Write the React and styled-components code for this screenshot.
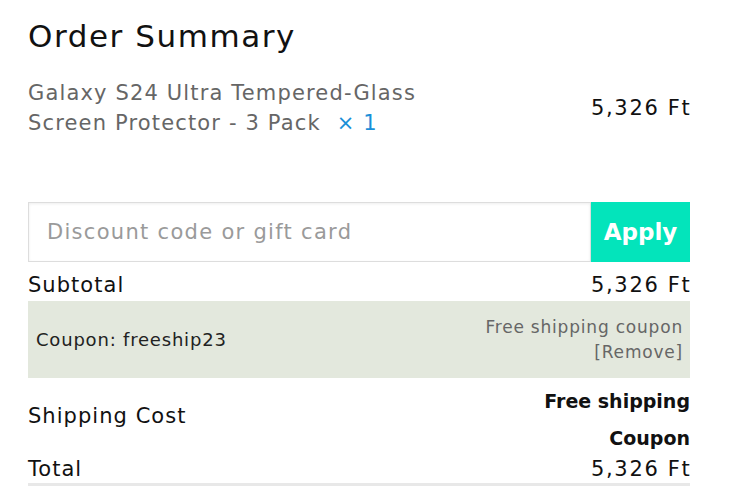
import React from "react";
import styled, { createGlobalStyle } from "styled-components";

const GlobalStyle = createGlobalStyle`
    body {
        margin: 0;
        background: #ffffff;
        font-family: 'DejaVu Sans', 'Noto Sans', sans-serif;
        color: #111111;
    }
`;

export default function App() {
    return (
        <>
            <GlobalStyle />
            <Summary>
                <Title>Order Summary</Title>

                <ProductRow>
                    <ProductName>
                        Galaxy S24 Ultra Tempered-Glass Screen Protector - 3 Pack
                        <Quantity>× 1</Quantity>
                    </ProductName>
                    <Amount>5,326 Ft</Amount>
                </ProductRow>

                <DiscountForm onSubmit={(e) => e.preventDefault()}>
                    <DiscountInput placeholder="Discount code or gift card" />
                    <ApplyButton type="submit">Apply</ApplyButton>
                </DiscountForm>

                <Line>
                    <span>Subtotal</span>
                    <Amount>5,326 Ft</Amount>
                </Line>

                <CouponBox>
                    <CouponName>Coupon: freeship23</CouponName>
                    <CouponInfo>
                        <div>Free shipping coupon</div>
                        <RemoveLink>[Remove]</RemoveLink>
                    </CouponInfo>
                </CouponBox>

                <ShippingLine>
                    <ShippingLabel>Shipping Cost</ShippingLabel>
                    <ShippingValue>
                        <div>Free shipping</div>
                        <div>Coupon</div>
                    </ShippingValue>
                </ShippingLine>

                <TotalLine>
                    <span>Total</span>
                    <Amount>5,326 Ft</Amount>
                </TotalLine>
            </Summary>
        </>
    );
}

const Summary = styled.div`
    width: 662px;
    padding: 0 39px 0 28px;
    display: flex;
    flex-direction: column;
    letter-spacing: 0.065em;
`;

const Title = styled.h2`
    font-size: 31px;
    font-weight: 400;
    letter-spacing: 0.05em;
    color: #111111;
    margin: 14px 0 0 0;
    line-height: 44px;
`;

const ProductRow = styled.div`
    display: flex;
    justify-content: space-between;
    align-items: center;
    margin-top: 20px;
`;

const ProductName = styled.div`
    width: 420px;
    font-size: 21px;
    line-height: 30px;
    letter-spacing: 0.055em;
    color: #666666;
`;

const Quantity = styled.span`
    color: #1a8fd8;
    margin-left: 16px;
    font-weight: 500;
`;

const Amount = styled.span`
    font-size: 21px;
    letter-spacing: 0.08em;
    margin-right: -1.5px;
    color: #111111;
`;

const DiscountForm = styled.form`
    display: flex;
    height: 60px;
    margin-top: 64px;
`;

const DiscountInput = styled.input`
    flex: 1;
    min-width: 0;
    border: 1px solid #dddddd;
    box-shadow: inset 0 1px 3px rgba(0, 0, 0, 0.07);
    padding: 0 18px;
    font-family: inherit;
    font-size: 21px;
    letter-spacing: 0.062em;
    outline: none;

    &::placeholder {
        color: #9a9a9a;
    }
`;

const ApplyButton = styled.button`
    width: 99px;
    border: none;
    background: #03e4bb;
    color: #ffffff;
    font-family: inherit;
    font-size: 23px;
    font-weight: 600;
    cursor: pointer;
`;

const Line = styled.div`
    display: flex;
    justify-content: space-between;
    align-items: center;
    font-size: 21px;
    height: 39px;
    padding-top: 6px;
    box-sizing: border-box;
`;

const CouponBox = styled.div`
    display: flex;
    justify-content: space-between;
    align-items: center;
    background: #e3e8dd;
    height: 77px;
    padding: 0 8px;
    letter-spacing: 0.05em;
`;

const CouponName = styled.span`
    font-size: 18px;
    color: #222222;
`;

const CouponInfo = styled.div`
    text-align: right;
    font-size: 17px;
    line-height: 25px;
    margin-right: -1px;
    color: #666666;
`;

const RemoveLink = styled.span`
    cursor: pointer;
`;

const ShippingLine = styled.div`
    display: flex;
    justify-content: space-between;
    align-items: center;
    font-size: 21px;
    padding-top: 5px;
`;

const ShippingLabel = styled.span`
    margin-bottom: 8px;
`;

const ShippingValue = styled.div`
    text-align: right;
    font-size: 19px;
    font-weight: 600;
    letter-spacing: 0;
    line-height: 37px;
`;

const TotalLine = styled(Line)`
    height: 29px;
    padding-top: 0;
    align-items: flex-start;
    border-bottom: 3px solid #e8e8e8;
`;
